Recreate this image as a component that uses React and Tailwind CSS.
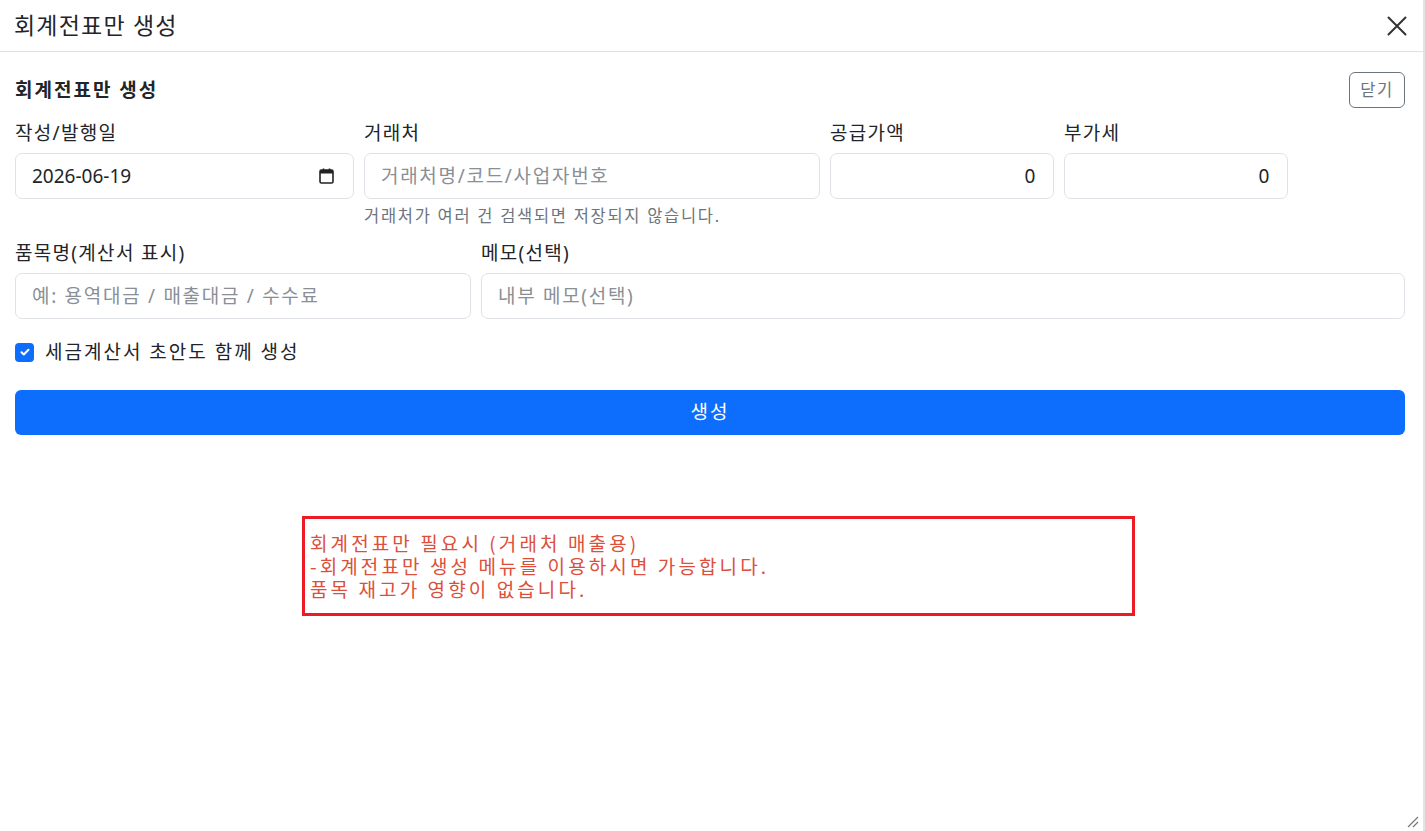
const FONT = { fontFamily: '"Noto Sans", "Noto Sans CJK KR", sans-serif' };

function Field({ label, className, children, help }) {
  return (
    <div className={className}>
      <label className="block text-[19px] leading-[24px] tracking-[1.3px] text-[#212529] mb-[8px]">{label}</label>
      {children}
      {help && <p className="mt-[5px] text-[16.5px] leading-[24px] tracking-[1.7px] text-[#6c757d]">{help}</p>}
    </div>
  );
}

const inputCls =
  "w-full h-[46px] rounded-[7px] border border-[#dee2e6] bg-white px-[16px] text-[19px] tracking-[1.7px] text-[#212529] placeholder:text-[#8a8f95] outline-none";

function CalendarIcon() {
  return (
    <svg width="15" height="16" viewBox="0 0 15 16" fill="none">
      <rect x="1" y="2" width="13" height="13" rx="1.5" stroke="#222" strokeWidth="1.6" />
      <rect x="1" y="2" width="13" height="3.5" fill="#222" />
      <path d="M4.5 0.5v2.5M10.5 0.5v2.5" stroke="#222" strokeWidth="1.6" />
    </svg>
  );
}

export default function App() {
  return (
    <div className="relative w-full h-[831px] bg-white border-r-2 border-[#e3e3e3] flex flex-col" style={FONT}>
      <div className="h-[52px] shrink-0 border-b border-[#dee2e6] flex items-center justify-between pl-[14px] pr-[16px]">
        <h1 className="text-[23px] tracking-[1.2px] text-[#212529]">회계전표만 생성</h1>
        <svg width="20" height="20" viewBox="0 0 20 20">
          <path d="M1.5 1.5l17 17M18.5 1.5l-17 17" stroke="#333" strokeWidth="2" strokeLinecap="round" />
        </svg>
      </div>

      <div className="pl-[15px] pr-[18px] pt-[20px]">
        <div className="flex items-center justify-between h-[36px]">
          <h2 className="text-[19px] tracking-[2px] font-bold text-[#212529]">회계전표만 생성</h2>
          <button className="h-[36px] w-[56px] rounded-[6px] border border-[#6c757d] text-[16.5px] tracking-[1.5px] text-[#6c757d]">닫기</button>
        </div>

        <div className="mt-[13px] flex gap-[10px] items-start">
          <Field label="작성/발행일" className="w-[339px]">
            <div className="w-full h-[46px] rounded-[7px] border border-[#dee2e6] bg-white pl-[16px] pr-[19px] flex items-center justify-between">
              <span className="text-[19px] text-[#212529]">2026-06-19</span>
              <CalendarIcon />
            </div>
          </Field>
          <Field label="거래처" className="w-[456px]" help="거래처가 여러 건 검색되면 저장되지 않습니다.">
            <input type="text" placeholder="거래처명/코드/사업자번호" className={inputCls} />
          </Field>
          <Field label="공급가액" className="w-[224px]">
            <input type="text" defaultValue="0" className={inputCls + " text-right"} />
          </Field>
          <Field label="부가세" className="w-[224px]">
            <input type="text" defaultValue="0" className={inputCls + " text-right"} />
          </Field>
        </div>

        <div className="mt-[13px] flex gap-[10px]">
          <Field label="품목명(계산서 표시)" className="w-[456px]">
            <input type="text" placeholder="예: 용역대금 / 매출대금 / 수수료" className={inputCls} />
          </Field>
          <Field label="메모(선택)" className="flex-1">
            <input type="text" placeholder="내부 메모(선택)" className={inputCls} />
          </Field>
        </div>

        <label className="mt-[21px] flex items-center gap-[11px] h-[24px]">
          <span className="w-[19px] h-[19px] rounded-[4px] bg-[#0d6efd] flex items-center justify-center">
            <svg width="12" height="12" viewBox="0 0 12 12" fill="none">
              <path d="M2.5 6.2l2.3 2.3 4.7-4.8" stroke="white" strokeWidth="2" strokeLinecap="round" strokeLinejoin="round" />
            </svg>
          </span>
          <span className="text-[19px] tracking-[2px] text-[#212529]">세금계산서 초안도 함께 생성</span>
        </label>

        <button className="mt-[26px] w-full h-[45px] rounded-[6px] bg-[#0d6efd] text-white text-[19px] tracking-[2px]">생성</button>
      </div>

      <div className="ml-[302px] mt-[81px] w-[833px] h-[100px] border-[3px] border-[#ed1c24] pl-[5px] pt-[12px]">
        <p className="text-[19px] leading-[23px] tracking-[3.1px] text-[#dc4f3b]" style={{ fontFamily: '"Noto Sans CJK KR", sans-serif' }}>
          회계전표만 필요시 (거래처 매출용)
          <br />
          -회계전표만 생성 메뉴를 이용하시면 가능합니다.
          <br />
          품목 재고가 영향이 없습니다.
        </p>
      </div>

      <svg className="absolute right-[4px] bottom-[3px]" width="12" height="12" viewBox="0 0 12 12">
        <path d="M1 11L11 1M6 11L11 6" stroke="#777" strokeWidth="1.2" />
      </svg>
    </div>
  );
}
